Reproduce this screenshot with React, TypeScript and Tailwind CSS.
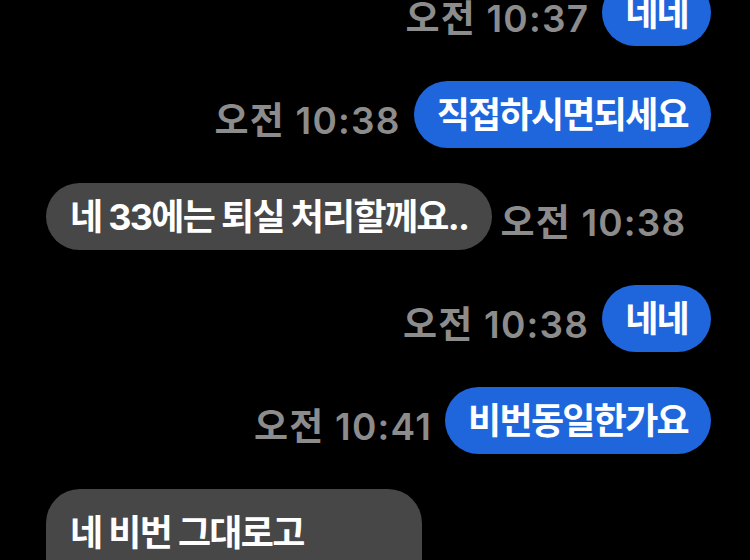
import React from "react";

type Msg = {
  text: string;
  time: string;
  mine: boolean;
};

const messages: Msg[] = [
  { text: "네네", time: "오전 10:37", mine: true },
  { text: "직접하시면되세요", time: "오전 10:38", mine: true },
  { text: "네 33에는 퇴실 처리할께요..", time: "오전 10:38", mine: false },
  { text: "네네", time: "오전 10:38", mine: true },
  { text: "비번동일한가요", time: "오전 10:41", mine: true },
];

const font = { fontFamily: '"Inter", "Noto Sans CJK KR", sans-serif' };

const Time = ({ t }: { t: string }) => (
  <span className="translate-y-[6px] text-[37px] leading-[48px] font-semibold tracking-[1.2px] text-[#8c8c8c] whitespace-nowrap">
    {t}
  </span>
);

const Bubble = ({ text, mine }: { text: string; mine: boolean }) => (
  <div
    className={
      mine
        ? "flex h-[67px] items-center rounded-full bg-[#1f66dd] px-[23px] text-[36px] font-bold tracking-[-1.7px] text-white whitespace-nowrap"
        : "flex h-[67px] items-center rounded-full bg-[#474747] px-[24px] text-[36px] font-bold tracking-[-1.7px] text-white whitespace-nowrap"
    }
  >
    {text}
  </div>
);

export default function App() {
  return (
    <div className="h-[560px] w-[750px] overflow-hidden bg-black" style={font}>
      <div className="-mt-[21px] flex flex-col gap-[35px]">
        {messages.map((m, i) =>
          m.mine ? (
            <div key={i} className="flex items-center justify-end gap-[13px] pr-[39px]">
              <Time t={m.time} />
              <Bubble text={m.text} mine />
            </div>
          ) : (
            <div key={i} className="flex items-center justify-start gap-[8px] pl-[46px]">
              <Bubble text={m.text} mine={false} />
              <Time t={m.time} />
            </div>
          )
        )}

        {/* last one is two lines, cut off by the bottom edge */}
        <div className="flex pl-[46px]">
          <div className="h-[120px] w-[376px] rounded-[34px] bg-[#474747] px-[24px] pt-[17px] text-[36px] font-bold tracking-[-1.7px] text-white">
            네 비번 그대로고
          </div>
        </div>
      </div>
    </div>
  );
}
